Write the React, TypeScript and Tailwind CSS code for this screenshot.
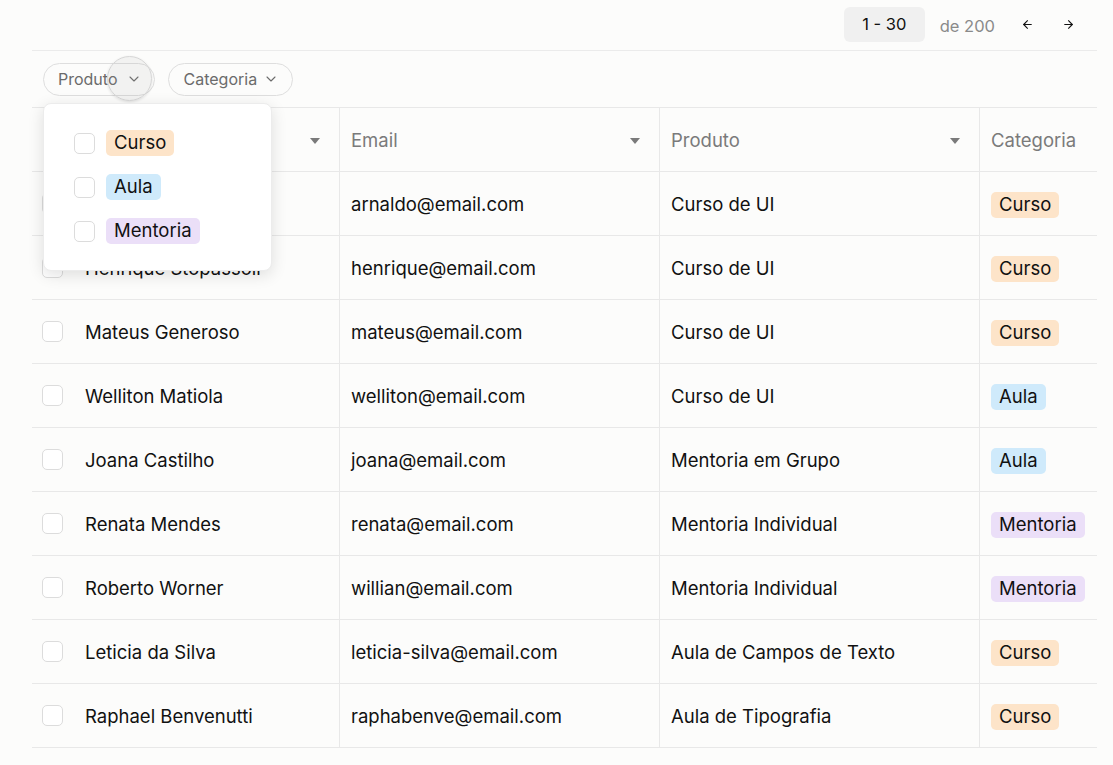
import React from 'react';
import { ChevronDown, ArrowLeft, ArrowRight } from 'lucide-react';

type Cat = 'Curso' | 'Aula' | 'Mentoria';

const rows: { name: string; email: string; produto: string; cat: Cat }[] = [
  { name: 'Arnaldo Souza', email: 'arnaldo@email.com', produto: 'Curso de UI', cat: 'Curso' },
  { name: 'Henrique Stopassoli', email: 'henrique@email.com', produto: 'Curso de UI', cat: 'Curso' },
  { name: 'Mateus Generoso', email: 'mateus@email.com', produto: 'Curso de UI', cat: 'Curso' },
  { name: 'Welliton Matiola', email: 'welliton@email.com', produto: 'Curso de UI', cat: 'Aula' },
  { name: 'Joana Castilho', email: 'joana@email.com', produto: 'Mentoria em Grupo', cat: 'Aula' },
  { name: 'Renata Mendes', email: 'renata@email.com', produto: 'Mentoria Individual', cat: 'Mentoria' },
  { name: 'Roberto Worner', email: 'willian@email.com', produto: 'Mentoria Individual', cat: 'Mentoria' },
  { name: 'Leticia da Silva', email: 'leticia-silva@email.com', produto: 'Aula de Campos de Texto', cat: 'Curso' },
  { name: 'Raphael Benvenutti', email: 'raphabenve@email.com', produto: 'Aula de Tipografia', cat: 'Curso' },
];

const badgeColor: Record<Cat, string> = {
  Curso: 'bg-[#fde4c9]',
  Aula: 'bg-[#cfeafb]',
  Mentoria: 'bg-[#ebdff8]',
};

const Badge = ({ cat }: { cat: Cat }) => (
  <span className={`inline-flex h-[26px] items-center rounded-[5px] px-2 text-[18.5px] text-[#111] ${badgeColor[cat]}`}>
    {cat}
  </span>
);

const Checkbox = () => (
  <span className="block h-[21px] w-[21px] shrink-0 rounded-[5px] border border-[#dcdcdc] bg-white" />
);

const SortCaret = () => (
  <svg width="10" height="6" viewBox="0 0 10 6" className="shrink-0">
    <path d="M0 0 L10 0 L5 6 Z" fill="#7a7a7a" />
  </svg>
);

export default function App() {
  return (
    <div className="relative min-h-[765px] w-full overflow-hidden bg-[#fcfcfb] pl-8 font-['Inter',sans-serif] text-[#111]">
      <div className="w-[1065px]">
        {/* pagination */}
        <div className="flex h-[51px] items-start justify-end border-b border-[#ebebeb] pt-[7px]">
          <div className="flex h-[35px] w-[81px] items-center justify-center rounded-[6px] bg-[#f0f0f0] text-[16.5px] text-[#111]">
            1 - 30
          </div>
          <span className="ml-[15px] mt-[7px] text-[16.5px] text-[#8a8a8a]">de 200</span>
          <div className="ml-[26px] mr-[22px] mt-[11px] flex items-center gap-[28px] text-[#111]">
            <ArrowLeft size={13} strokeWidth={2} />
            <ArrowRight size={13} strokeWidth={2} />
          </div>
        </div>

        {/* filters */}
        <div className="flex h-[56px] items-center gap-[13px] pl-[11px]">
          <button className="flex h-[33px] items-center gap-[8px] rounded-full border border-[#dedede] pl-[14px] pr-[12px] text-[16px] text-[#6b6b6b]">
            Produto <ChevronDown size={16} strokeWidth={1.6} />
          </button>
          <button className="flex h-[33px] items-center gap-[6px] rounded-full border border-[#dedede] pl-[15px] pr-[13px] text-[16px] text-[#6b6b6b]">
            Categoria <ChevronDown size={16} strokeWidth={1.6} />
          </button>
        </div>

        {/* table */}
        <div className="border-t border-[#e8e8e8]">
          <div className="grid h-[64px] grid-cols-[308px_320px_320px_117px] border-b border-[#e8e8e8] text-[18.5px] text-[#7a7a7a]">
            <div className="flex items-center justify-between border-r border-[#e8e8e8] pl-[10px] pr-[19px] pt-[2px]">
              <span className="pl-[43px]">Nome</span>
              <SortCaret />
            </div>
            <div className="flex items-center justify-between border-r border-[#e8e8e8] pl-[11px] pr-[19px] pt-[2px]">
              <span>Email</span>
              <SortCaret />
            </div>
            <div className="flex items-center justify-between border-r border-[#e8e8e8] pl-[11px] pr-[19px] pt-[2px]">
              <span>Produto</span>
              <SortCaret />
            </div>
            <div className="flex items-center pl-[11px] pt-[2px]">
              <span>Categoria</span>
            </div>
          </div>
          {rows.map((r) => (
            <div
              key={r.email}
              className="grid h-[64px] grid-cols-[308px_320px_320px_117px] border-b border-[#e8e8e8] text-[18.5px]"
            >
              <div className="flex items-center gap-[22px] border-r border-[#e8e8e8] pl-[10px]">
                <Checkbox />
                <span className="pt-[2px]">{r.name}</span>
              </div>
              <div className="flex items-center border-r border-[#e8e8e8] pl-[11px] pt-[2px]">{r.email}</div>
              <div className="flex items-center border-r border-[#e8e8e8] pl-[11px] pt-[2px]">{r.produto}</div>
              <div className="flex items-center pl-[11px] pt-[2px]">
                <Badge cat={r.cat} />
              </div>
            </div>
          ))}
        </div>
      </div>

      {/* click highlight */}
      <div className="pointer-events-none absolute left-[107px] top-[56px] h-[45px] w-[45px] rounded-full border border-[#d6d6d6] bg-[#9a9a9a]/10 shadow-[0_1px_3px_rgba(0,0,0,0.12)]" />

      {/* dropdown */}
      <div className="absolute left-[43px] top-[103px] flex w-[229px] flex-col rounded-[8px] border border-[#ececec] bg-white py-[17px] pl-[30px] shadow-[0_4px_16px_rgba(0,0,0,0.12)]">
        {(['Curso', 'Aula', 'Mentoria'] as Cat[]).map((c) => (
          <div key={c} className="flex h-[44px] items-center gap-[11px]">
            <Checkbox />
            <Badge cat={c} />
          </div>
        ))}
      </div>
    </div>
  );
}
